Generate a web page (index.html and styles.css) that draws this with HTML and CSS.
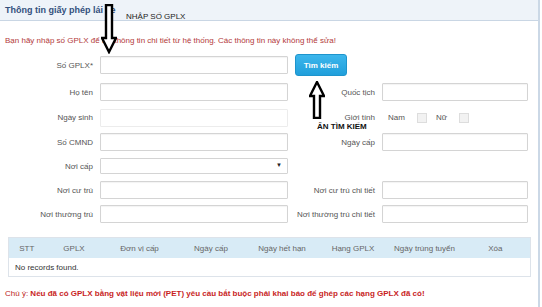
FILE: index.html
```html
<!DOCTYPE html>
<html lang="vi">
<head>
	<meta charset="UTF-8">
	<title>Thông tin giấy phép lái xe</title>
	<link rel="stylesheet" href="styles.css">
</head>
<body>
	<div class="panel">
		<div class="panel-head">Thông tin giấy phép lái xe</div>
		<div class="panel-body">
			<p class="notice">Bạn hãy nhập số GPLX để lấy thông tin chi tiết từ hệ thống. Các thông tin này không thể sửa!</p>
			<div class="form">
				<label class="lbl">Số GPLX*</label>
				<input class="txt" type="text">
				<div class="btn-cell"><button class="btn">Tìm kiếm</button></div>
				<div></div>

				<label class="lbl">Họ tên</label>
				<input class="txt" type="text">
				<label class="lbl">Quốc tịch</label>
				<input class="txt" type="text">

				<label class="lbl">Ngày sinh</label>
				<input class="txt txt-off" type="text">
				<label class="lbl">Giới tính</label>
				<div class="gender">
					<span>Nam</span><i class="chk"></i>
					<span>Nữ</span><i class="chk"></i>
				</div>

				<label class="lbl">Số CMND</label>
				<input class="txt" type="text">
				<label class="lbl">Ngày cấp</label>
				<input class="txt" type="text">

				<label class="lbl">Nơi cấp</label>
				<div class="sel"><select><option></option></select></div>
				<div></div>
				<div></div>

				<label class="lbl">Nơi cư trú</label>
				<input class="txt" type="text">
				<label class="lbl">Nơi cư trú chi tiết</label>
				<input class="txt" type="text">

				<label class="lbl">Nơi thường trú</label>
				<input class="txt" type="text">
				<label class="lbl">Nơi thường trú chi tiết</label>
				<input class="txt" type="text">
			</div>

			<table class="grid">
				<colgroup>
					<col style="width:36px"><col style="width:59px"><col style="width:72px"><col style="width:71px">
					<col style="width:71px"><col style="width:71px"><col style="width:72px"><col style="width:70px">
				</colgroup>
				<thead>
					<tr>
						<th>STT</th><th>GPLX</th><th>Đơn vị cấp</th><th>Ngày cấp</th>
						<th>Ngày hết hạn</th><th>Hạng GPLX</th><th>Ngày trúng tuyển</th><th>Xóa</th>
					</tr>
				</thead>
				<tbody>
					<tr><td colspan="8">No records found.</td></tr>
				</tbody>
			</table>

			<p class="note"><span>Chú ý:</span> <b>Nếu đã có GPLX bằng vật liệu mới (PET) yêu cầu bắt buộc phải khai báo để ghép các hạng GPLX đã có!</b></p>
		</div>

		<!-- chú thích hướng dẫn -->
		<svg class="arrow arrow-down" width="16" height="50" viewBox="0 0 16 50">
			<path d="M5 1 H11 V34 H15 L8 48 L1 34 H5 Z" fill="#fff" stroke="#000" stroke-width="2.4" stroke-linejoin="miter"/>
		</svg>
		<span class="hint hint-top">NHẬP SỐ GPLX</span>
		<svg class="arrow arrow-up" width="16" height="38" viewBox="0 0 16 38">
			<path d="M8 1 L15 15 H11 V37 H5 V15 H1 Z" fill="#fff" stroke="#000" stroke-width="2.4" stroke-linejoin="miter"/>
		</svg>
		<span class="hint hint-btn">ẤN TÌM KIẾM</span>
	</div>
</body>
</html>
```

FILE: styles.css
```css
body {
	margin: 0;
	font-family: "Liberation Sans", Arial, sans-serif;
	font-size: 8px;
	color: #555;
	background: #fff;
}
p {
	margin: 0;
}
.panel {
	position: relative;
	width: 538px;
	height: 307px;
	border-right: 2px solid #cbd8e6;
}
.panel-head {
	height: 20px;
	line-height: 20px;
	padding-left: 5px;
	background: #eef3f9;
	border-bottom: 1px solid #c9d6e4;
	color: #33507d;
	font-size: 9px;
	font-weight: bold;
}
.notice {
	margin-top: 14px;
	padding-left: 5px;
	line-height: 12px;
	color: #b33a3a;
}
.form {
	display: grid;
	grid-template-columns: 93px 188px 80px 146px;
	grid-template-rows: 28px 26px 25px 24px 24px 24px 24px;
	column-gap: 7px;
	align-items: center;
	margin-top: 4px;
}
.lbl {
	text-align: right;
	color: #555;
	white-space: nowrap;
}
.txt {
	box-sizing: border-box;
	height: 18px;
	margin: 0;
	padding: 0 3px;
	border: 1px solid #d4d4d4;
	border-radius: 1px;
	box-shadow: inset 0 1px 1px rgba(0,0,0,.05);
	font: inherit;
}
.txt-off {
	border-color: #ececec;
	box-shadow: none;
}
.btn-cell {
	display: flex;
}
.btn {
	width: 52px;
	height: 22px;
	margin: 0;
	padding: 0;
	border: 1px solid #1e94cc;
	border-radius: 3px;
	background: linear-gradient(#3cb6ec, #209fdb);
	color: #fff;
	font: bold 8px "Liberation Sans", Arial, sans-serif;
}
.gender {
	display: flex;
	align-items: center;
	padding-left: 6px;
	color: #555;
}
.chk {
	width: 8px;
	height: 8px;
	margin: 0 9px 0 12px;
	border: 1px solid #ddd;
	background: #f2f2f2;
}
.sel {
	position: relative;
	height: 16px;
}
.sel select {
	box-sizing: border-box;
	width: 100%;
	height: 16px;
	margin: 0;
	border: 1px solid #d4d4d4;
	border-radius: 1px;
	background: #fff;
	-webkit-appearance: none;
	appearance: none;
	font: inherit;
}
.sel:after {
	content: "▼";
	position: absolute;
	top: 4px;
	right: 6px;
	font-size: 6px;
	color: #222;
}
.grid {
	width: 522px;
	margin: 11px 0 0 8px;
	border-collapse: collapse;
	table-layout: fixed;
	border: 1px solid #dde3ea;
}
.grid th {
	height: 20px;
	padding: 0;
	background: #d8ebf6;
	font-weight: normal;
	color: #666;
	text-align: center;
}
.grid td {
	height: 18px;
	padding: 0 0 0 6px;
	color: #333;
}
.note {
	margin-top: 11px;
	padding-left: 5px;
	line-height: 12px;
	color: #b22;
}
.note b {
	color: #c81e1e;
}
.arrow {
	position: absolute;
}
.arrow-down {
	left: 101px;
	top: 4px;
}
.arrow-up {
	left: 309px;
	top: 81px;
}
.hint {
	position: absolute;
	color: #222;
	font-size: 8px;
	white-space: nowrap;
}
.hint-top {
	left: 126px;
	top: 12px;
}
.hint-btn {
	left: 317px;
	top: 122px;
	font-weight: bold;
	color: #111;
}
```
